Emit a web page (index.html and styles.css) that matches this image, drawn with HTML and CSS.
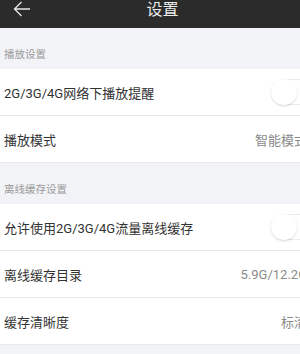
FILE: index.html
```html
<!DOCTYPE html>
<html lang="zh">
<head>
<meta charset="utf-8">
<link rel="stylesheet" href="styles.css">
</head>
<body>
<div class="page">
  <header class="topbar">
    <svg class="back" width="18" height="16" viewBox="0 0 18 16">
      <path d="M8.5 1 L1.5 8 L8.5 15 M1.5 8 H17" fill="none" stroke="#e8e8e8" stroke-width="1.3"/>
    </svg>
    <div class="title">设置</div>
  </header>

  <div class="section-label">播放设置</div>
  <div class="group">
    <div class="row">
      <span class="label">2G/3G/4G网络下播放提醒</span>
      <span class="toggle"><span class="knob"></span></span>
    </div>
    <div class="row">
      <span class="label">播放模式</span>
      <span class="value">智能模式</span>
    </div>
  </div>

  <div class="section-label">离线缓存设置</div>
  <div class="group">
    <div class="row">
      <span class="label">允许使用2G/3G/4G流量离线缓存</span>
      <span class="toggle"><span class="knob"></span></span>
    </div>
    <div class="row">
      <span class="label">离线缓存目录</span>
      <span class="value">5.9G/12.2G</span>
    </div>
    <div class="row">
      <span class="label">缓存清晰度</span>
      <span class="value">标清</span>
    </div>
  </div>
</div>
</body>
</html>
```
FILE: styles.css
```css
html, body {
  margin: 0;
  padding: 0;
  background: #f2f3f7;
  overflow: hidden;
}
body {
  width: 300px;
  height: 354px;
  font-family: Roboto, "Noto Sans CJK SC", sans-serif;
}
.page {
  width: 325px;
  display: flex;
  flex-direction: column;
}
.topbar {
  height: 28px;
  background: #2b2b2b;
  display: flex;
  align-items: flex-start;
  position: relative;
}
.back {
  margin: 1px 0 0 13px;
  display: block;
}
.title {
  position: absolute;
  left: 0;
  right: 0;
  top: 0;
  text-align: center;
  color: #ececec;
  font-size: 16px;
  line-height: 20px;
}
.section-label {
  height: 41px;
  box-sizing: border-box;
  display: flex;
  align-items: flex-end;
  padding: 0 0 8px 4px;
  font-size: 10.5px;
  line-height: 12px;
  color: #9a9a9a;
}
.group {
  background: #fff;
  display: flex;
  flex-direction: column;
}
.row {
  height: 47px;
  box-sizing: border-box;
  border-bottom: 1px solid #e9e9ec;
  display: flex;
  align-items: center;
  justify-content: space-between;
  padding: 0 18px 0 4px;
}
.label {
  font-size: 13px;
  color: #333;
}
.value {
  font-size: 13px;
  color: #8a8a8a;
}
.toggle {
  width: 48px;
  height: 26px;
  box-sizing: border-box;
  border: 1px solid #ebebeb;
  border-radius: 14px;
  background: #fff;
  margin-right: -12px;
  display: flex;
  align-items: center;
}
.knob {
  width: 26px;
  height: 26px;
  margin-left: -1px;
  border-radius: 50%;
  background: #fff;
  box-shadow: 0 1px 2px rgba(0,0,0,0.16);
}
```
